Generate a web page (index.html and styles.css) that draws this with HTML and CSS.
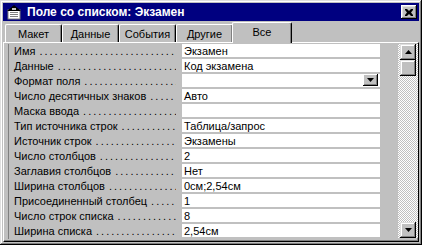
FILE: index.html
```html
<!DOCTYPE html>
<html lang="ru">
<head>
    <meta charset="UTF-8">
    <title>Поле со списком: Экзамен</title>
    <link rel="stylesheet" href="styles.css">
</head>
<body>
    <div class="window">
        <!-- Title bar -->
        <div class="titlebar">
            <svg class="app-icon" width="16" height="16" viewBox="0 0 16 16">
                <rect x="2" y="6" width="12" height="9" fill="#fff" stroke="#808080"/>
                <path d="M1 7 L8 1 L15 7 Z" fill="#000"/>
                <rect x="4" y="8" width="8" height="1" fill="#808080"/>
                <rect x="4" y="10" width="8" height="1" fill="#808080"/>
                <rect x="4" y="12" width="8" height="1" fill="#808080"/>
                <rect x="6" y="4" width="4" height="2" fill="#c0c0c0"/>
            </svg>
            <span class="title">Поле со списком: Экзамен</span>
            <button class="close" type="button">
                <svg width="8" height="7" viewBox="0 0 8 7">
                    <path d="M0 0h2l2 2 2-2h2v1l-2 2.5 2 2.5v1h-2l-2-2-2 2h-2v-1l2-2.5-2-2.5z" fill="#000"/>
                </svg>
            </button>
        </div>

        <!-- Tabs -->
        <div class="tabs">
            <div class="tab">Макет</div>
            <div class="tab">Данные</div>
            <div class="tab">События</div>
            <div class="tab">Другие</div>
            <div class="tab active">Все</div>
        </div>

        <!-- Property sheet -->
        <div class="sheet">
            <div class="list">
                <div class="props">
                    <div class="row"><div class="name">Имя</div><div class="value">Экзамен</div></div>
                    <div class="row"><div class="name">Данные</div><div class="value">Код экзамена</div></div>
                    <div class="row">
                        <div class="name">Формат поля</div>
                        <div class="value">
                            <span class="drop">
                                <svg width="7" height="4" viewBox="0 0 7 4"><path d="M0 0h7L3.5 4z" fill="#000"/></svg>
                            </span>
                        </div>
                    </div>
                    <div class="row"><div class="name">Число десятичных знаков</div><div class="value">Авто</div></div>
                    <div class="row"><div class="name">Маска ввода</div><div class="value"></div></div>
                    <div class="row"><div class="name">Тип источника строк</div><div class="value">Таблица/запрос</div></div>
                    <div class="row"><div class="name">Источник строк</div><div class="value">Экзамены</div></div>
                    <div class="row"><div class="name">Число столбцов</div><div class="value">2</div></div>
                    <div class="row"><div class="name">Заглавия столбцов</div><div class="value">Нет</div></div>
                    <div class="row"><div class="name">Ширина столбцов</div><div class="value">0см;2,54см</div></div>
                    <div class="row"><div class="name">Присоединенный столбец</div><div class="value">1</div></div>
                    <div class="row"><div class="name">Число строк списка</div><div class="value">8</div></div>
                    <div class="row"><div class="name">Ширина списка</div><div class="value">2,54см</div></div>
                </div>

                <!-- Vertical scrollbar -->
                <div class="scrollbar">
                    <div class="sb-btn">
                        <svg width="7" height="4" viewBox="0 0 7 4"><path d="M3.5 0L7 4H0z" fill="#000"/></svg>
                    </div>
                    <div class="sb-thumb"></div>
                    <div class="sb-track"></div>
                    <div class="sb-btn">
                        <svg width="7" height="4" viewBox="0 0 7 4"><path d="M0 0h7L3.5 4z" fill="#000"/></svg>
                    </div>
                </div>
            </div>
        </div>
    </div>
</body>
</html>
```

FILE: styles.css
```css
body {
    margin: 0;
    font-family: 'Liberation Sans', Arial, sans-serif;
    font-size: 11px;
    color: #000;
    background: #c0c0c0;
}

/* Outer window frame */
.window {
    width: 422px;
    height: 245px;
    box-sizing: border-box;
    padding: 3px;
    background: #c0c0c0;
    box-shadow: inset -1px -1px #000, inset 1px 1px #dfdfdf,
                inset -2px -2px #808080, inset 2px 2px #fff;
    display: flex;
    flex-direction: column;
}

.titlebar {
    height: 18px;
    flex: none;
    background: #000080;
    color: #fff;
    display: flex;
    align-items: center;
    padding: 0 2px 0 3px;
}

.app-icon {
    flex: none;
    margin-right: 5px;
}

.title {
    font-weight: bold;
    font-size: 12px;
    white-space: nowrap;
}

.close {
    margin-left: auto;
    width: 16px;
    height: 14px;
    padding: 0;
    border: none;
    background: #c0c0c0;
    display: flex;
    align-items: center;
    justify-content: center;
    box-shadow: inset -1px -1px #000, inset 1px 1px #fff,
                inset -2px -2px #808080, inset 2px 2px #dfdfdf;
}

/* Tab strip */
.tabs {
    display: flex;
    align-items: flex-end;
    height: 20px;
    margin-top: 1px;
    padding: 0 2px;
    flex: none;
    position: relative;
    z-index: 1;
}

.tab {
    width: 57px;
    height: 18px;
    box-sizing: border-box;
    border-top: 1px solid #fff;
    border-left: 1px solid #fff;
    border-right: 1px solid #000;
    border-radius: 2px 2px 0 0;
    box-shadow: inset -1px 0 #808080;
    text-align: center;
    line-height: 18px;
    white-space: nowrap;
}

.tab.active {
    height: 21px;
    margin: 0 -1px -1px -1px;
    width: 60px;
    background: #c0c0c0;
    line-height: 19px;
}

/* Property sheet panel */
.sheet {
    flex: 1;
    border-top: 1px solid #fff;
    border-left: 1px solid #fff;
    border-right: 1px solid #000;
    border-bottom: 1px solid #000;
    box-shadow: inset -1px -1px #808080;
    padding: 1px 1px 2px 4px;
    display: flex;
}

.list {
    flex: 1;
    display: flex;
    border-left: 1px solid #808080;
}

.props {
    width: 371px;
}

.row {
    display: flex;
    height: 13px;
    margin-bottom: 2px;
    line-height: 14px;
}

.name {
    width: 173px;
    box-sizing: border-box;
    padding: 0 6px 0 5px;
    display: flex;
    white-space: nowrap;
    overflow: hidden;
}

/* dot leader after each property name */
.name::after {
    content: "..............................................................";
    flex: 1;
    overflow: hidden;
    letter-spacing: 2px;
    margin-left: 4px;
}

.value {
    flex: 1;
    background: #fff;
    padding-left: 2px;
    white-space: nowrap;
    position: relative;
}

.drop {
    position: absolute;
    right: 2px;
    top: 0;
    width: 15px;
    height: 12px;
    box-sizing: border-box;
    background: #c0c0c0;
    display: flex;
    align-items: center;
    justify-content: center;
    box-shadow: inset -1px -1px #000, inset 1px 1px #fff,
                inset -2px -2px #808080;
}

/* Scrollbar */
.scrollbar {
    margin-left: 18px;
    width: 20px;
    margin-bottom: 1px;
    display: flex;
    flex-direction: column;
    align-items: center;
    background-color: #c0c0c0;
    background-image: conic-gradient(#fff 25%, #c0c0c0 0 50%, #fff 0 75%, #c0c0c0 0);
    background-size: 2px 2px;
}

.sb-btn,
.sb-thumb {
    width: 16px;
    height: 16px;
    flex: none;
    background: #c0c0c0;
    box-shadow: inset -1px -1px #000, inset 1px 1px #dfdfdf,
                inset -2px -2px #808080, inset 2px 2px #fff;
}

.sb-btn {
    display: flex;
    align-items: center;
    justify-content: center;
}

.sb-track {
    flex: 1;
}
```
